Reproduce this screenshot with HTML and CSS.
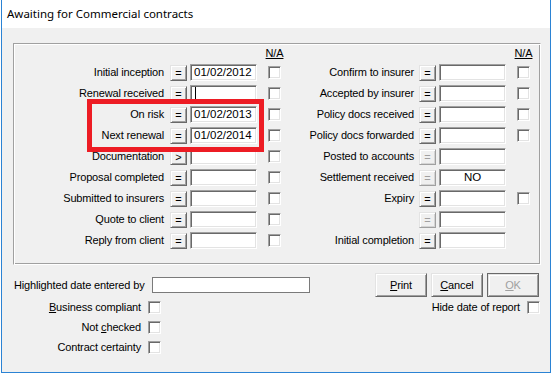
FILE: index.html
```html
<!DOCTYPE html>
<html>
<head>
<meta charset="utf-8">
<link rel="stylesheet" href="styles.css">
</head>
<body>
<div class="window">
  <div class="titlebar">Awaiting for Commercial contracts</div>
  <div class="content">
    <div class="group">
      <div class="grid">
        <span></span><span></span><span></span><span class="na">N/A</span>
        <span></span><span></span><span></span><span class="na">N/A</span>

        <span class="lbl">Initial inception</span><span class="btn">=</span><span class="field">01/02/2012</span><span class="cb"></span>
        <span class="lbl r">Confirm to insurer</span><span class="btn">=</span><span class="field"></span><span class="cb"></span>

        <span class="lbl">Renewal received</span><span class="btn">=</span><span class="field"><span class="caret"></span></span><span class="cb"></span>
        <span class="lbl r">Accepted by insurer</span><span class="btn">=</span><span class="field"></span><span class="cb"></span>

        <span class="lbl">On risk</span><span class="btn">=</span><span class="field">01/02/2013</span><span class="cb"></span>
        <span class="lbl r">Policy docs received</span><span class="btn">=</span><span class="field"></span><span class="cb"></span>

        <span class="lbl">Next renewal</span><span class="btn">=</span><span class="field">01/02/2014</span><span class="cb"></span>
        <span class="lbl r">Policy docs forwarded</span><span class="btn">=</span><span class="field"></span><span class="cb"></span>

        <span class="lbl">Documentation</span><span class="btn">&gt;</span><span class="field"></span><span class="cb"></span>
        <span class="lbl r">Posted to accounts</span><span class="btn disabled">=</span><span class="field"></span><span></span>

        <span class="lbl">Proposal completed</span><span class="btn">=</span><span class="field"></span><span class="cb"></span>
        <span class="lbl r">Settlement received</span><span class="btn disabled">=</span><span class="field center">NO</span><span></span>

        <span class="lbl">Submitted to insurers</span><span class="btn">=</span><span class="field"></span><span class="cb"></span>
        <span class="lbl r">Expiry</span><span class="btn">=</span><span class="field"></span><span class="cb"></span>

        <span class="lbl">Quote to client</span><span class="btn">=</span><span class="field"></span><span class="cb"></span>
        <span class="lbl r"></span><span class="btn disabled">=</span><span class="field"></span><span></span>

        <span class="lbl">Reply from client</span><span class="btn">=</span><span class="field"></span><span class="cb"></span>
        <span class="lbl r">Initial completion</span><span class="btn">=</span><span class="field"></span><span></span>
      </div>
    </div>
    <div class="bottom">
      <div class="entry-row">
        <span class="plain">Highlighted date entered by</span>
        <span class="flat-input"></span>
        <div class="actions">
          <span class="pbtn"><u>P</u>rint</span>
          <span class="pbtn"><u>C</u>ancel</span>
          <span class="pbtn default disabled"><u>O</u>K</span>
        </div>
      </div>
      <div class="flags-row">
        <div class="flags">
          <span class="flbl"><u>B</u>usiness compliant</span><span class="cb"></span>
          <span class="flbl">Not <u>c</u>hecked</span><span class="cb"></span>
          <span class="flbl">Contract certainty</span><span class="cb"></span>
        </div>
        <div class="hide">
          <span class="plain">Hide date of report</span><span class="cb"></span>
        </div>
      </div>
    </div>
  </div>
  <div class="highlight"></div>
</div>
</body>
</html>
```
FILE: styles.css
```css
* { box-sizing: border-box; }
html, body { margin: 0; padding: 0; background: #fff; }
body {
  font-family: "Liberation Sans", Arial, sans-serif;
  font-size: 11px;
  color: #000;
}
.window {
  position: relative;
  margin-left: 1px;
  width: 550px;
  height: 373px;
  border: 1px solid #2b83d4;
  border-top: 0;
  background: #f0f0f0;
}
.titlebar {
  height: 28px;
  background: #fff;
  padding: 6px 0 0 5px;
  font-family: "Noto Sans", "Open Sans", sans-serif;
  font-size: 11.5px;
  line-height: 16px;
}
.content { padding: 15px 9px 0 11px; }
.group {
  height: 222px;
  border: 1px solid;
  border-color: #a0a0a0 #fff #fff #a0a0a0;
  box-shadow: inset 1px 1px #fff, inset -1px -1px #a0a0a0;
}
.grid {
  display: grid;
  grid-template-columns: 156px 17px 81px 13px 138px 17px 81px 13px;
  grid-template-rows: 18px repeat(9, 21px);
  align-items: center;
}
.na {
  justify-self: center;
  text-decoration: underline;
  line-height: 13px;
  letter-spacing: -0.15px;
}
.lbl {
  text-align: right;
  padding-right: 6px;
  line-height: 13px;
  white-space: nowrap;
  letter-spacing: -0.15px;
}
.lbl.r { padding-right: 5px; }
.btn {
  height: 16px;
  width: 17px;
  background: #f0f0f0;
  border: 1px solid;
  border-color: #e3e3e3 #696969 #696969 #e3e3e3;
  box-shadow: inset 1px 1px #fff, inset -1px -1px #a0a0a0;
  display: flex;
  align-items: center;
  justify-content: center;
  font-size: 11px;
  line-height: 12px;
}
.btn.disabled {
  color: #a0a0a0;
  border-color: #e3e3e3 #a0a0a0 #a0a0a0 #e3e3e3;
  box-shadow: inset 1px 1px #fff, inset -1px -1px #d4d4d4;
}
.field {
  margin-left: 3px;
  width: 67px;
  height: 17px;
  background: #fff;
  border: 1px solid;
  border-color: #a0a0a0 #fff #fff #a0a0a0;
  box-shadow: inset 1px 1px #696969, inset -1px -1px #e3e3e3;
  padding-left: 3px;
  font-size: 11.5px;
  line-height: 15px;
  display: flex;
  align-items: center;
  white-space: nowrap;
}
.field.center { justify-content: center; padding-left: 0; }
.caret {
  display: block;
  width: 1px;
  height: 13px;
  background: #000;
  margin-left: 1px;
}
.cb {
  width: 13px;
  height: 13px;
  background: #fff;
  border: 1px solid;
  border-color: #a0a0a0 #fff #fff #a0a0a0;
  box-shadow: inset 1px 1px #696969, inset -1px -1px #e3e3e3;
}
.bottom { padding: 8px 1px 0 1px; }
.entry-row {
  display: flex;
  align-items: center;
  height: 24px;
}
.plain {
  line-height: 13px;
  white-space: nowrap;
  letter-spacing: -0.15px;
}
.flat-input {
  margin-left: 7px;
  width: 158px;
  height: 16px;
  background: #fff;
  border: 1px solid #7a7a7a;
}
.actions {
  margin-left: auto;
  margin-right: 1px;
  display: flex;
  gap: 4px;
}
.pbtn {
  width: 52px;
  height: 24px;
  background: #f0f0f0;
  border: 1px solid;
  border-color: #e3e3e3 #696969 #696969 #e3e3e3;
  box-shadow: inset 1px 1px #fff, inset -1px -1px #a0a0a0;
  display: flex;
  align-items: center;
  justify-content: center;
  font-size: 11px;
  line-height: 13px;
  letter-spacing: -0.15px;
}
.pbtn.default {
  border-color: #696969;
  box-shadow: inset 1px 1px #e3e3e3, inset -1px -1px #a0a0a0, inset 2px 2px #fff;
}
.pbtn.disabled { color: #a0a0a0; }
.flags-row {
  display: flex;
  align-items: flex-start;
}
.flags {
  display: grid;
  grid-template-columns: 127px 13px;
  grid-auto-rows: 20px;
  column-gap: 7px;
  align-items: center;
}
.flbl {
  text-align: right;
  line-height: 13px;
  white-space: nowrap;
  letter-spacing: -0.15px;
}
.hide {
  margin-left: auto;
  height: 20px;
  display: flex;
  align-items: center;
  gap: 7px;
}
.highlight {
  position: absolute;
  left: 85px;
  top: 99px;
  width: 177px;
  height: 53px;
  border: 5px solid #ed1c24;
}
```
